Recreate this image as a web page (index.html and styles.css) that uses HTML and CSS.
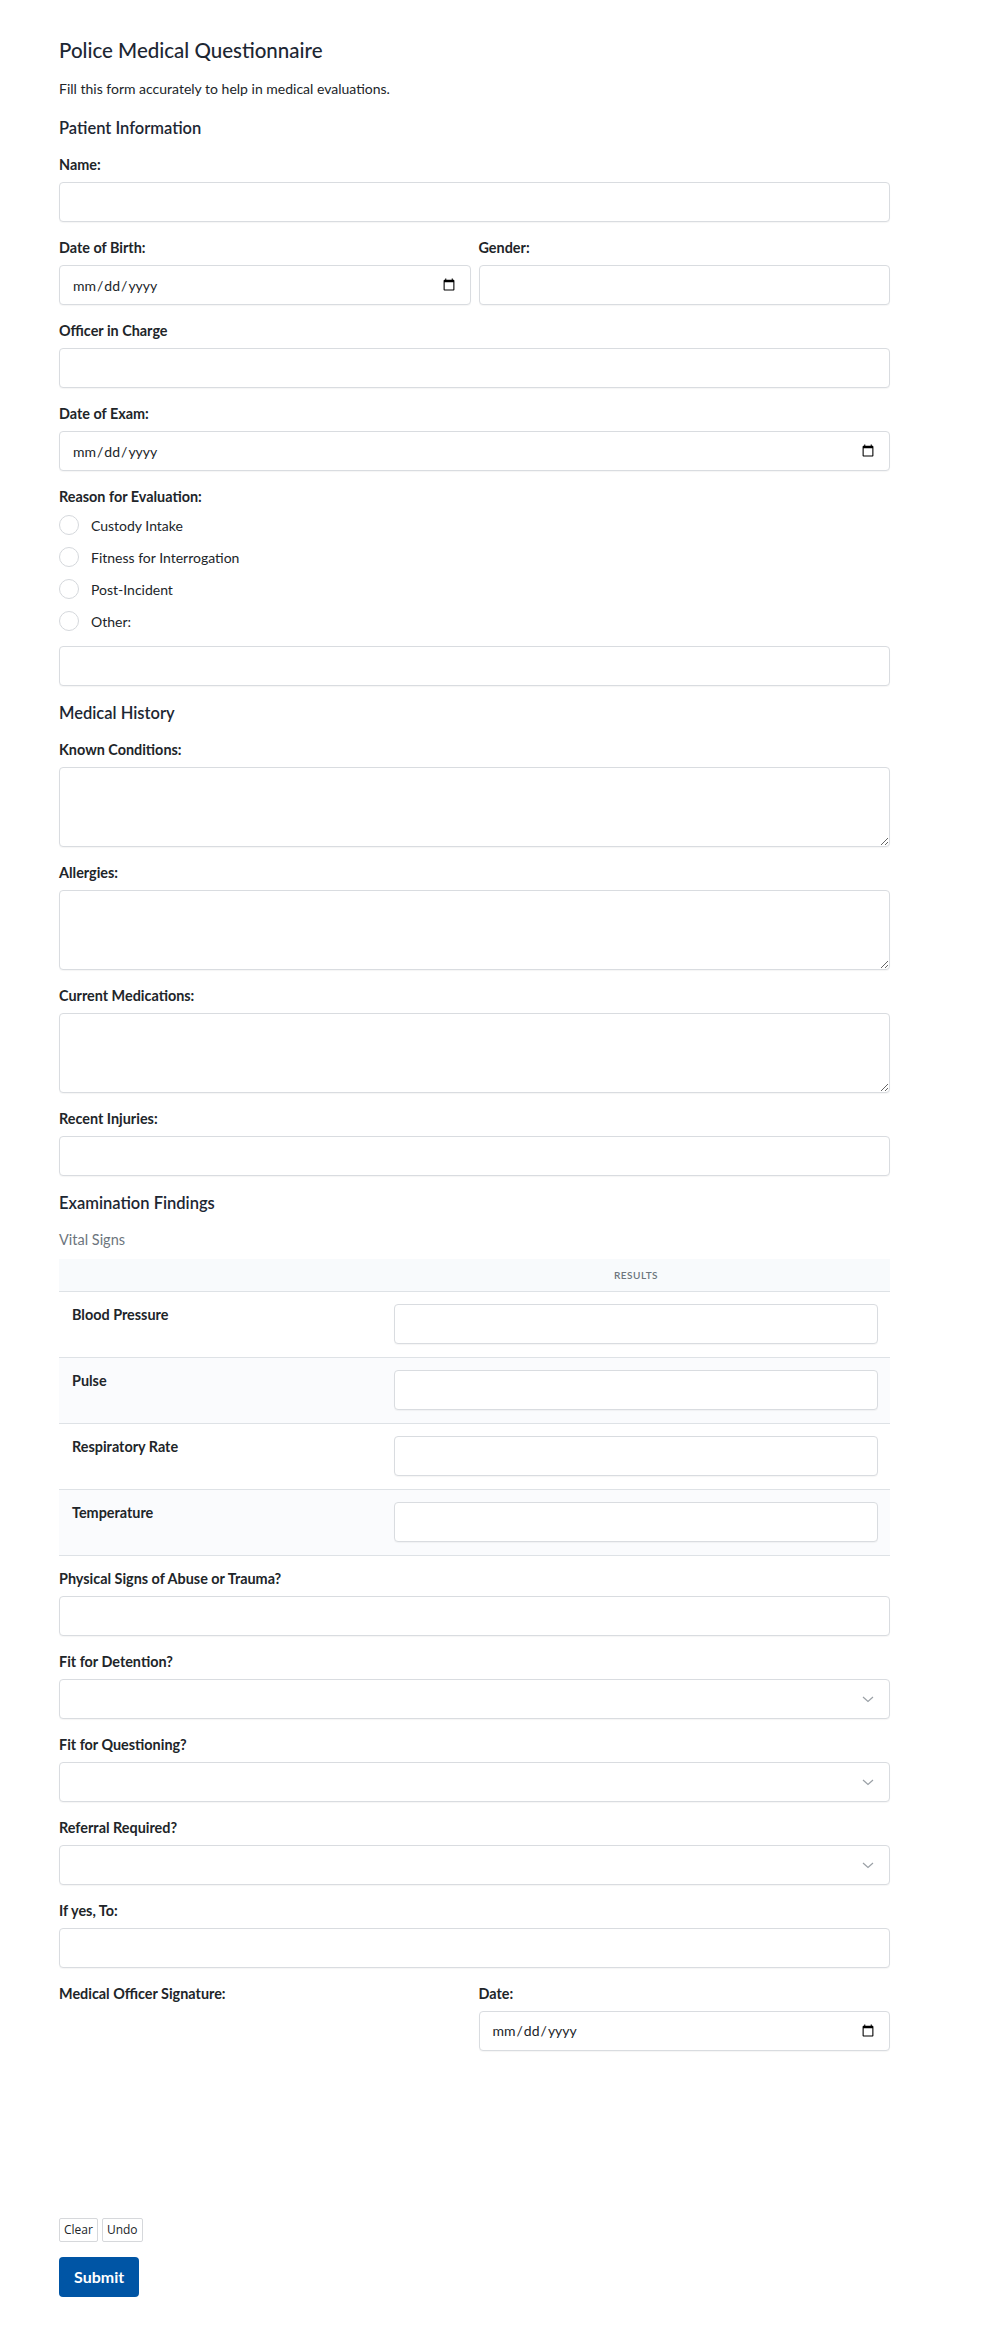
FILE: index.html
```html
<!DOCTYPE html>
<html lang="en">
<head>
<meta charset="utf-8">
<title>Police Medical Questionnaire</title>
<link rel="stylesheet" href="styles.css">
</head>
<body>
<div class="page">
  <h1 class="title">Police Medical Questionnaire</h1>
  <p class="intro">Fill this form accurately to help in medical evaluations.</p>

  <h2 class="section">Patient Information</h2>
  <div class="field">
    <label class="lbl">Name:</label>
    <input class="ctl" type="text">
  </div>
  <div class="row2">
    <div class="field">
      <label class="lbl">Date of Birth:</label>
      <input class="ctl" type="date">
    </div>
    <div class="field">
      <label class="lbl">Gender:</label>
      <input class="ctl" type="text">
    </div>
  </div>
  <div class="field">
    <label class="lbl">Officer in Charge</label>
    <input class="ctl" type="text">
  </div>
  <div class="field">
    <label class="lbl">Date of Exam:</label>
    <input class="ctl" type="date">
  </div>
  <div class="field">
    <label class="lbl">Reason for Evaluation:</label>
    <div class="radios">
      <label class="radio"><input type="radio" name="reason"><span>Custody Intake</span></label>
      <label class="radio"><input type="radio" name="reason"><span>Fitness for Interrogation</span></label>
      <label class="radio"><input type="radio" name="reason"><span>Post-Incident</span></label>
      <label class="radio"><input type="radio" name="reason"><span>Other:</span></label>
    </div>
    <input class="ctl" type="text">
  </div>

  <h2 class="section">Medical History</h2>
  <div class="field">
    <label class="lbl">Known Conditions:</label>
    <textarea class="ctl area"></textarea>
  </div>
  <div class="field">
    <label class="lbl">Allergies:</label>
    <textarea class="ctl area"></textarea>
  </div>
  <div class="field">
    <label class="lbl">Current Medications:</label>
    <textarea class="ctl area"></textarea>
  </div>
  <div class="field">
    <label class="lbl">Recent Injuries:</label>
    <input class="ctl" type="text">
  </div>

  <h2 class="section">Examination Findings</h2>
  <div class="sub">Vital Signs</div>
  <table class="vitals">
    <thead>
      <tr><th class="c1"></th><th class="c2">Results</th></tr>
    </thead>
    <tbody>
      <tr><td class="name">Blood Pressure</td><td class="val"><input class="ctl" type="text"></td></tr>
      <tr><td class="name">Pulse</td><td class="val"><input class="ctl" type="text"></td></tr>
      <tr><td class="name">Respiratory Rate</td><td class="val"><input class="ctl" type="text"></td></tr>
      <tr><td class="name">Temperature</td><td class="val"><input class="ctl" type="text"></td></tr>
    </tbody>
  </table>

  <div class="field">
    <label class="lbl">Physical Signs of Abuse or Trauma?</label>
    <input class="ctl" type="text">
  </div>
  <div class="field">
    <label class="lbl">Fit for Detention?</label>
    <div class="selwrap">
      <select class="ctl sel"><option></option><option>Yes</option><option>No</option></select>
      <svg class="chev" width="12" height="7" viewBox="0 0 12 7"><path d="M1 1 L6 5.5 L11 1" fill="none" stroke="#9aa0a6" stroke-width="1.2"/></svg>
    </div>
  </div>
  <div class="field">
    <label class="lbl">Fit for Questioning?</label>
    <div class="selwrap">
      <select class="ctl sel"><option></option><option>Yes</option><option>No</option></select>
      <svg class="chev" width="12" height="7" viewBox="0 0 12 7"><path d="M1 1 L6 5.5 L11 1" fill="none" stroke="#9aa0a6" stroke-width="1.2"/></svg>
    </div>
  </div>
  <div class="field">
    <label class="lbl">Referral Required?</label>
    <div class="selwrap">
      <select class="ctl sel"><option></option><option>Yes</option><option>No</option></select>
      <svg class="chev" width="12" height="7" viewBox="0 0 12 7"><path d="M1 1 L6 5.5 L11 1" fill="none" stroke="#9aa0a6" stroke-width="1.2"/></svg>
    </div>
  </div>
  <div class="field">
    <label class="lbl">If yes, To:</label>
    <input class="ctl" type="text">
  </div>
  <div class="row2 sigrow">
    <div class="sigcol">
      <label class="lbl">Medical Officer Signature:</label>
      <div class="sigpad"></div>
      <div class="sigbtns">
        <button class="small" type="button">Clear</button>
        <button class="small" type="button">Undo</button>
      </div>
    </div>
    <div class="field">
      <label class="lbl">Date:</label>
      <input class="ctl" type="date">
    </div>
  </div>
  <button class="submit" type="submit">Submit</button>
</div>
</body>
</html>
```
FILE: styles.css
```css
* { box-sizing: border-box; }
html, body { margin: 0; padding: 0; background: #ffffff; }
body {
  font-family: Lato, "Liberation Sans", sans-serif;
  color: #212529;
  font-size: 14px;
}
.page {
  margin-left: 59px;
  width: 831px;
  padding-top: 36px;
  padding-bottom: 44px;
}
.title {
  font-size: 20.5px;
  line-height: 28px;
  font-weight: 500;
  margin: 0 0 15px;
  color: #1d2733;
}
.intro {
  font-size: 14px;
  line-height: 20px;
  margin: 0 0 17px;
}
.section {
  font-size: 16.5px;
  line-height: 24px;
  font-weight: 600;
  margin: 0 0 14px;
  color: #1d2733;
}
.field { margin-bottom: 15px; }
.lbl {
  display: block;
  font-size: 14.4px;
  line-height: 22px;
  font-weight: 700;
  margin-bottom: 6px;
}
.ctl {
  display: block;
  width: 100%;
  height: 40px;
  border: 1px solid #d9dce0;
  border-radius: 4px;
  background: #ffffff;
  box-shadow: 0 1px 1px rgba(0, 0, 0, 0.04);
  padding: 0 12px;
  font-family: Lato, "Liberation Sans", sans-serif;
  font-size: 14px;
  color: #212529;
  margin: 0;
}
.area { height: 80px; padding: 8px 12px; resize: vertical; }
.row2 {
  display: grid;
  grid-template-columns: 1fr 1fr;
  column-gap: 8px;
}
.radios {
  display: flex;
  flex-direction: column;
  gap: 10px;
  margin-bottom: 14px;
}
.radio {
  display: flex;
  align-items: center;
  height: 22px;
  gap: 12px;
  font-size: 14px;
}
.radio input {
  appearance: none;
  -webkit-appearance: none;
  width: 20px;
  height: 20px;
  margin: 0;
  border: 1px solid #d5d8dc;
  border-radius: 50%;
  background: #fff;
}
.sub {
  font-size: 14.5px;
  line-height: 22px;
  color: #6c757d;
  font-weight: 400;
  margin: 0 0 8px;
}
.vitals {
  width: 100%;
  border-collapse: collapse;
  margin-bottom: 12px;
}
.vitals th {
  height: 32px;
  background: #f8fafc;
  border-bottom: 1px solid #dee2e6;
  font-size: 10px;
  font-weight: 600;
  color: #6c757d;
  text-transform: uppercase;
  letter-spacing: 0.5px;
  text-align: center;
  padding: 0 12px;
}
.vitals .c1 { width: 323px; }
.vitals td {
  border-bottom: 1px solid #dee2e6;
  vertical-align: top;
  padding: 12px 12px 13px 12px;
}
.vitals tbody tr:nth-child(even) td { background: #fafbfd; }
.vitals .name {
  font-weight: 700;
  font-size: 14.4px;
  line-height: 22px;
  padding-left: 13px;
}
.selwrap { position: relative; }
.sel {
  appearance: none;
  -webkit-appearance: none;
  padding-right: 36px;
}
.chev {
  position: absolute;
  right: 16px;
  top: 17px;
  pointer-events: none;
}
.sigcol { display: flex; flex-direction: column; }
.sigpad { height: 196px; margin-top: 6px; }
.sigbtns { display: flex; gap: 4px; margin-top: 5px; }
.small {
  height: 24px;
  padding: 0 4px;
  border: 1px solid #d6d8db;
  border-radius: 2px;
  background: #ffffff;
  font-family: "Open Sans", "Liberation Sans", sans-serif;
  font-size: 12px;
  color: #212529;
}
.sigrow { margin-bottom: 15px; align-items: start; }
.sigrow .field { margin-bottom: 0; }
.submit {
  display: block;
  height: 40px;
  padding: 0 15px;
  border: none;
  border-radius: 4px;
  background: #0055a5;
  color: #ffffff;
  font-family: Lato, "Liberation Sans", sans-serif;
  font-size: 16px;
  font-weight: 700;
}
```
